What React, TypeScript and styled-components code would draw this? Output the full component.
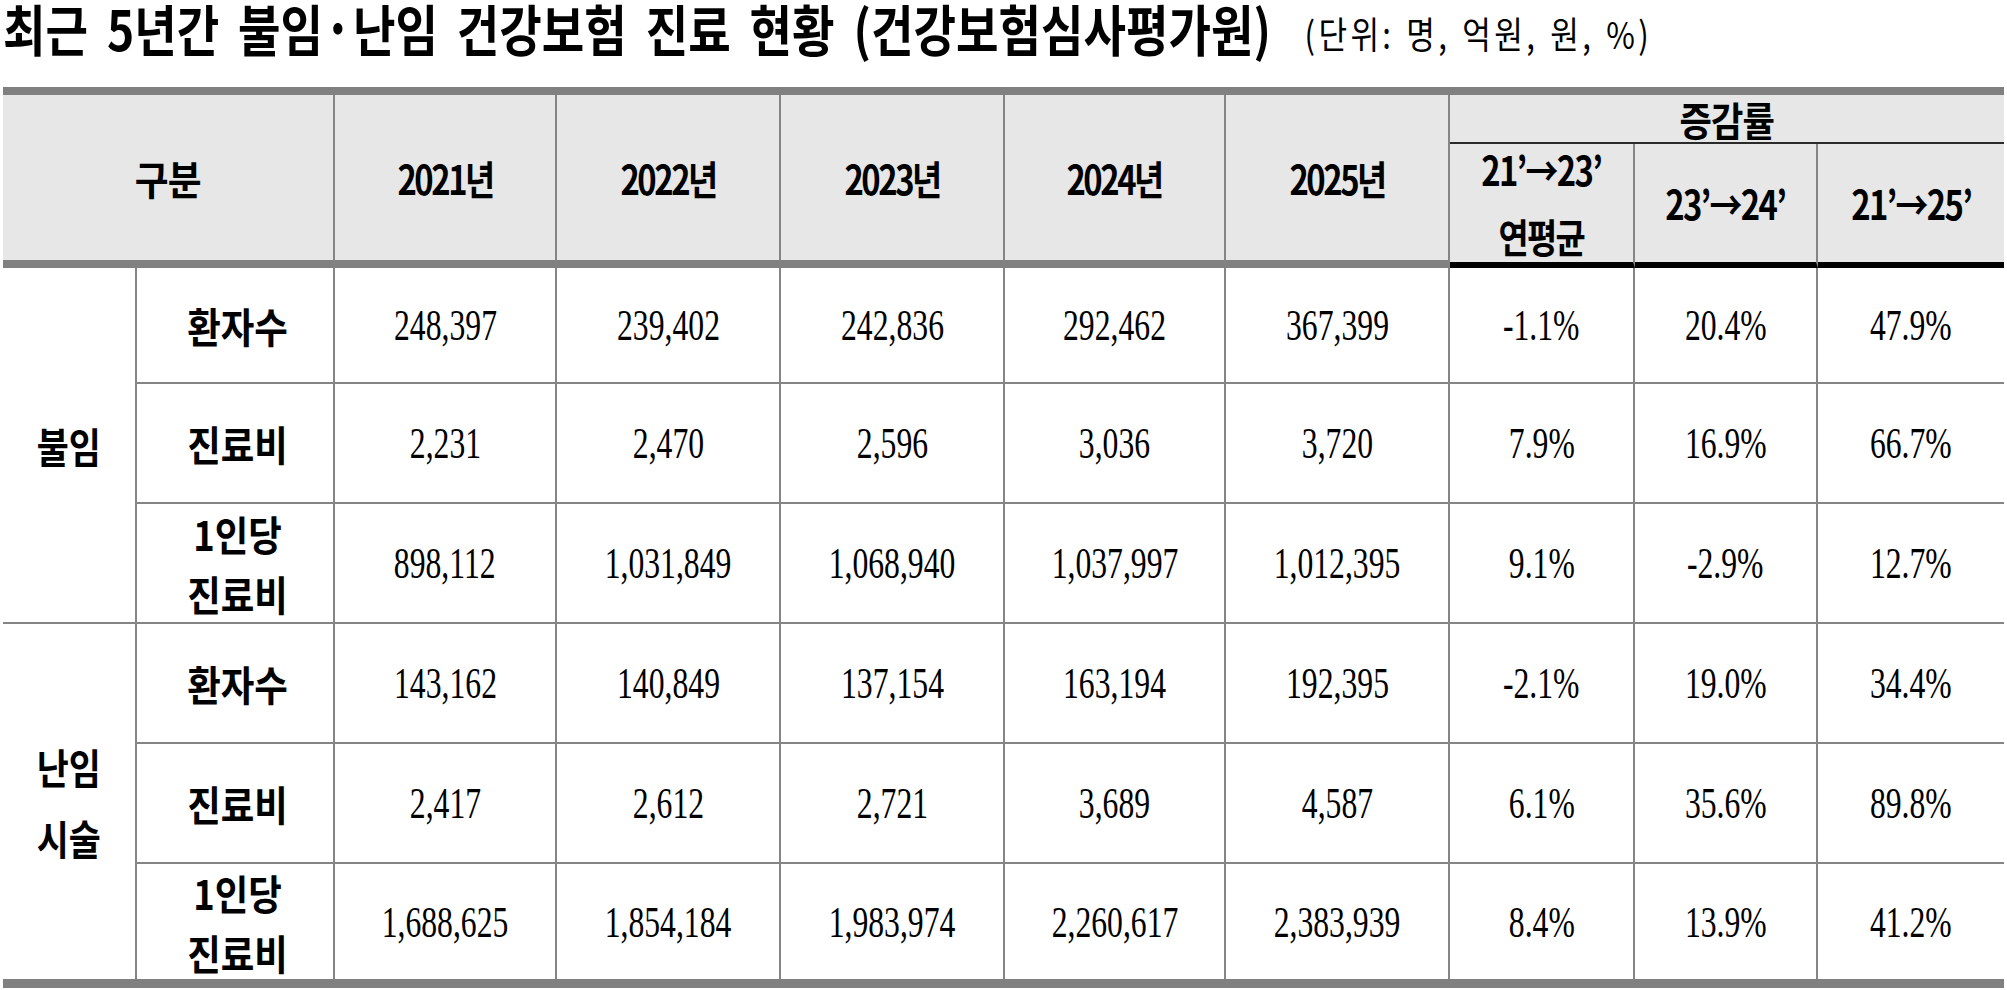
import React from "react";
import styled, { createGlobalStyle } from "styled-components";

const GlobalStyle = createGlobalStyle`
  html, body { margin: 0; padding: 0; background: #ffffff; }
  body {
    font-family: "Noto Sans CJK KR", "Noto Sans", sans-serif;
    color: #000000;
  }
`;

const SANS = `"Noto Sans CJK KR", "Noto Sans", sans-serif`;
const SERIF = `"Liberation Serif", "Noto Sans CJK KR", serif`;
const RULE = "#808080";
const LINE = "#858585";

const Page = styled.div`
  width: 2007px;
  height: 990px;
  padding-left: 3px;
  box-sizing: border-box;
  overflow: hidden;
`;

const Heading = styled.div`
  height: 87px;
`;

const Squeeze = styled.span<{ $s: number; $origin?: string }>`
  display: inline-block;
  white-space: nowrap;
  transform: scaleX(${(p) => p.$s});
  transform-origin: ${(p) => p.$origin ?? "center"};
`;

const HeadingLine = styled(Squeeze)`
  font-family: ${SANS};
  line-height: 54px;
`;

const Title = styled.span`
  font-size: 55px;
  font-weight: 700;
  word-spacing: 10px;
`;

const Dot = styled.span`
  font-size: 60px;
  line-height: 0;
`;

const Unit = styled.span`
  font-size: 37px;
  font-weight: 400;
  letter-spacing: 4px;
  word-spacing: 2px;
  margin-left: 40px;
  vertical-align: 2px;
`;

const Table = styled.div`
  display: grid;
  width: 2001px;
  grid-template-columns: 134px 198px 222px 224px 224px 221px 224px 185px 183px 186px;
  grid-template-rows: 49px 124px 116px 120px 120px 120px 120px 115px;
  border-top: 8px solid ${RULE};
  border-bottom: 9px solid ${RULE};
`;

const Cell = styled.div<{ $noRight?: boolean; $noBottom?: boolean }>`
  display: flex;
  align-items: center;
  justify-content: center;
  text-align: center;
  box-sizing: border-box;
  min-width: 0;
  border-right: ${(p) => (p.$noRight ? "none" : `2px solid ${LINE}`)};
  border-bottom: ${(p) => (p.$noBottom ? "none" : `2px solid ${LINE}`)};
`;

const HeadCell = styled(Cell)<{ $cols?: number; $rows?: number; $bottom: string }>`
  background: #e7e7e7;
  grid-column: span ${(p) => p.$cols ?? 1};
  grid-row: span ${(p) => p.$rows ?? 1};
  border-bottom: ${(p) => p.$bottom};
  font-family: ${SANS};
  font-weight: 700;
  font-size: 40px;
`;

const HeadText = styled(Squeeze)<{ $lh?: number; $ls?: number }>`
  line-height: ${(p) => p.$lh ?? 48}px;
  letter-spacing: ${(p) => p.$ls ?? -1}px;
`;

const GroupCell = styled(Cell)`
  grid-row: span 3;
  font-family: ${SANS};
  font-weight: 700;
  font-size: 41px;
`;

const LabelCell = styled(Cell)`
  font-family: ${SANS};
  font-weight: 700;
  font-size: 41px;
  padding-left: 6px;
`;

const BodyText = styled(Squeeze)<{ $lh: number }>`
  line-height: ${(p) => p.$lh}px;
`;

const DataCell = styled(Cell)`
  font-family: ${SERIF};
  font-weight: 400;
  font-size: 44px;
  padding-top: 2px;
`;

type Row = { label: string[]; vals: string[] };
type Group = { name: string[]; rows: Row[] };

const groups: Group[] = [
  {
    name: ["불임"],
    rows: [
      { label: ["환자수"], vals: ["248,397", "239,402", "242,836", "292,462", "367,399", "-1.1%", "20.4%", "47.9%"] },
      { label: ["진료비"], vals: ["2,231", "2,470", "2,596", "3,036", "3,720", "7.9%", "16.9%", "66.7%"] },
      { label: ["1인당", "진료비"], vals: ["898,112", "1,031,849", "1,068,940", "1,037,997", "1,012,395", "9.1%", "-2.9%", "12.7%"] },
    ],
  },
  {
    name: ["난임", "시술"],
    rows: [
      { label: ["환자수"], vals: ["143,162", "140,849", "137,154", "163,194", "192,395", "-2.1%", "19.0%", "34.4%"] },
      { label: ["진료비"], vals: ["2,417", "2,612", "2,721", "3,689", "4,587", "6.1%", "35.6%", "89.8%"] },
      { label: ["1인당", "진료비"], vals: ["1,688,625", "1,854,184", "1,983,974", "2,260,617", "2,383,939", "8.4%", "13.9%", "41.2%"] },
    ],
  },
];

const years = ["2021년", "2022년", "2023년", "2024년", "2025년"];
const HEAD_BAR = `8px solid ${RULE}`;
const SUB_BAR = "6px solid #000000";

function Lines({ lines }: { lines: string[] }) {
  return (
    <>
      {lines.map((l, i) => (
        <React.Fragment key={i}>
          {i > 0 && <br />}
          {l}
        </React.Fragment>
      ))}
    </>
  );
}

export default function App() {
  return (
    <Page>
      <GlobalStyle />
      <Heading>
        <HeadingLine $s={0.84} $origin="left">
          <Title>
            최근 5년간 불임<Dot>·</Dot>난임 건강보험 진료 현황 (건강보험심사평가원)
          </Title>
          <Unit>(단위: 명, 억원, 원, %)</Unit>
        </HeadingLine>
      </Heading>
      <Table>
        <HeadCell $cols={2} $rows={2} $bottom={HEAD_BAR}>
          <HeadText $s={0.92}>구분</HeadText>
        </HeadCell>
        {years.map((y) => (
          <HeadCell key={y} $rows={2} $bottom={HEAD_BAR}>
            <HeadText $s={0.82} $ls={-3}>
              {y}
            </HeadText>
          </HeadCell>
        ))}
        <HeadCell $cols={3} $noRight $bottom="2px solid #2a2a2a">
          <HeadText $s={0.88}>증감률</HeadText>
        </HeadCell>
        <HeadCell $bottom={SUB_BAR}>
          <HeadText $s={0.82} $lh={67} $ls={-2}>
            21’→23’
            <br />
            연평균
          </HeadText>
        </HeadCell>
        <HeadCell $bottom={SUB_BAR}>
          <HeadText $s={0.82} $ls={-2}>
            23’→24’
          </HeadText>
        </HeadCell>
        <HeadCell $noRight $bottom={SUB_BAR}>
          <HeadText $s={0.82} $ls={-2}>
            21’→25’
          </HeadText>
        </HeadCell>

        {groups.map((g, gi) => {
          const lastGroup = gi === groups.length - 1;
          return (
            <React.Fragment key={gi}>
              <GroupCell $noBottom={lastGroup}>
                <BodyText $s={0.85} $lh={71}>
                  <Lines lines={g.name} />
                </BodyText>
              </GroupCell>
              {g.rows.map((r, ri) => {
                const lastRow = lastGroup && ri === g.rows.length - 1;
                return (
                  <React.Fragment key={ri}>
                    <LabelCell $noBottom={lastRow}>
                      <BodyText $s={0.89} $lh={60}>
                        <Lines lines={r.label} />
                      </BodyText>
                    </LabelCell>
                    {r.vals.map((v, vi) => (
                      <DataCell key={vi} $noBottom={lastRow} $noRight={vi === r.vals.length - 1}>
                        <BodyText $s={0.72} $lh={50}>
                          {v}
                        </BodyText>
                      </DataCell>
                    ))}
                  </React.Fragment>
                );
              })}
            </React.Fragment>
          );
        })}
      </Table>
    </Page>
  );
}
